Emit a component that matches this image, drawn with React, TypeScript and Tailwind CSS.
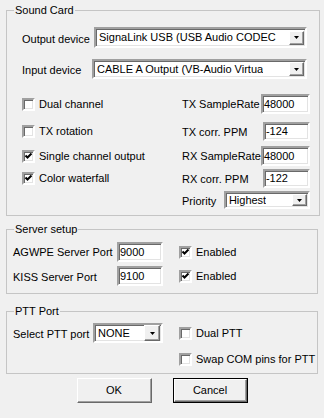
import React from "react";

const sunken =
  "border-2 border-t-[#a0a0a0] border-l-[#a0a0a0] border-r-white border-b-white bg-white shadow-[inset_1px_1px_0_#696969,inset_-1px_-1px_0_#e3e3e3]";
const raised =
  "border border-t-white border-l-white border-r-[#696969] border-b-[#696969] bg-[#f0f0f0] shadow-[inset_-1px_-1px_0_#a0a0a0]";

function Field({ value, className }: { value: string; className: string }) {
  return <div className={`${sunken} ${className} flex shrink-0 items-center pl-[1px]`}>{value}</div>;
}

function Combo({ value, className, btn = "h-[14px] w-[15px]" }: { value: string; className: string; btn?: string }) {
  return (
    <div className={`${sunken} ${className} flex shrink-0 items-center justify-between pl-[3px]`}>
      <span className="overflow-hidden whitespace-nowrap">{value}</span>
      <span className={`${raised} ${btn} mr-[1px] flex shrink-0 items-center justify-center`}>
        <svg width="5" height="3" viewBox="0 0 5 3">
          <path d="M0 0h5L2.5 3z" fill="#000" />
        </svg>
      </span>
    </div>
  );
}

function Check({ checked, label, className = "" }: { checked?: boolean; label: string; className?: string }) {
  return (
    <div className={`flex items-center ${className}`}>
      <span className={`${sunken} flex h-[13px] w-[13px] shrink-0 items-center justify-center`}>
        {checked && (
          <svg width="9" height="9" viewBox="0 0 9 9">
            <path d="M1.5 3.5 L3.5 5.5 L7.5 1.5" stroke="#000" strokeWidth="2" fill="none" />
          </svg>
        )}
      </span>
      <span className="ml-[4px] whitespace-nowrap">{label}</span>
    </div>
  );
}

function Legend({ children }: { children: React.ReactNode }) {
  return <legend className="ml-[7px] px-[1px] leading-[13px]">{children}</legend>;
}

export default function App() {
  return (
    <div className="flex h-[418px] w-[324px] flex-col bg-[#f0f0f0] px-[6px] pt-[4px] font-['Liberation_Sans',Arial,sans-serif] text-[11px] leading-[13px] text-black">
      <fieldset className="border border-[#c5c5c5]">
        <Legend>Sound Card</Legend>
        <div className="pb-[4px] pl-[15px] pr-[9px]">
          <div className="mt-[10px] flex h-[21px] items-center">
            <span className="w-[72px] pt-[3px] whitespace-nowrap">Output device</span>
            <Combo value="SignaLink USB (USB Audio CODEC" className="h-[21px] w-[213px]" />
          </div>
          <div className="mt-[11px] flex h-[20px] items-center">
            <span className="w-[70px] pt-[3px] whitespace-nowrap">Input device</span>
            <Combo value="CABLE A Output (VB-Audio Virtua" className="h-[20px] w-[215px]" />
          </div>

          <div className="mt-[14px] flex h-[22px] items-center">
            <Check label="Dual channel" className="w-[160px]" />
            <span className="min-w-0 flex-1 whitespace-nowrap">TX SampleRate</span>
            <Field value="48000" className="h-[20px] w-[49px]" />
          </div>
          <div className="mt-[5px] flex h-[22px] items-center">
            <Check label="TX rotation" className="w-[160px]" />
            <span className="min-w-0 flex-1 whitespace-nowrap pt-[2px]">TX corr. PPM</span>
            <Field value="-124" className="h-[19px] w-[47px]" />
          </div>
          <div className="mt-[3px] flex h-[22px] items-center">
            <Check checked label="Single channel output" className="w-[160px]" />
            <span className="min-w-0 flex-1 whitespace-nowrap">RX SampleRate</span>
            <Field value="48000" className="h-[20px] w-[49px]" />
          </div>
          <div className="flex h-[22px] items-center">
            <Check checked label="Color waterfall" className="w-[160px]" />
            <span className="min-w-0 flex-1 whitespace-nowrap pt-[2px]">RX corr. PPM</span>
            <Field value="-122" className="h-[19px] w-[47px]" />
          </div>
          <div className="flex h-[22px] items-center">
            <span className="w-[160px]" />
            <span className="min-w-0 flex-1 whitespace-nowrap pt-[2px]">Priority</span>
            <Combo value="Highest" className="h-[18px] w-[86px]" btn="h-[12px] w-[15px]" />
          </div>
        </div>
      </fieldset>

      <fieldset className="mt-[7px] border border-[#c5c5c5]">
        <Legend>Server setup</Legend>
        <div className="pb-[5px] pl-[6px]">
          <div className="mt-[4px] flex h-[24px] items-center">
            <span className="w-[104px] whitespace-nowrap">AGWPE Server Port</span>
            <Field value="9000" className="h-[20px] w-[46px]" />
            <Check checked label="Enabled" className="ml-[16px]" />
          </div>
          <div className="flex h-[24px] items-center">
            <span className="w-[104px] whitespace-nowrap pt-[2px]">KISS Server Port</span>
            <Field value="9100" className="h-[20px] w-[46px]" />
            <Check checked label="Enabled" className="ml-[16px]" />
          </div>
        </div>
      </fieldset>

      <fieldset className="mt-[11px] border border-[#c5c5c5]">
        <Legend>PTT Port</Legend>
        <div className="pb-[4px] pl-[6px]">
          <div className="mt-[5px] flex h-[20px] items-center">
            <span className="w-[80px] whitespace-nowrap pt-[2px]">Select PTT port</span>
            <Combo value="NONE" className="h-[20px] w-[70px]" btn="h-[16px] w-[16px]" />
            <Check label="Dual PTT" className="ml-[16px]" />
          </div>
          <div className="mt-[6px] flex h-[20px] items-center">
            <Check label="Swap COM pins for PTT" className="ml-[166px]" />
          </div>
        </div>
      </fieldset>

      <div className="mt-[4px] flex justify-center gap-[21px]">
        <button className={`${raised} h-[25px] w-[75px]`}>OK</button>
        <button className="h-[25px] w-[75px] border border-black bg-[#f0f0f0]">
          <span className="flex h-full w-full items-center justify-center border border-t-white border-l-white border-r-[#696969] border-b-[#696969] shadow-[inset_-1px_-1px_0_#a0a0a0]">
            Cancel
          </span>
        </button>
      </div>
    </div>
  );
}
